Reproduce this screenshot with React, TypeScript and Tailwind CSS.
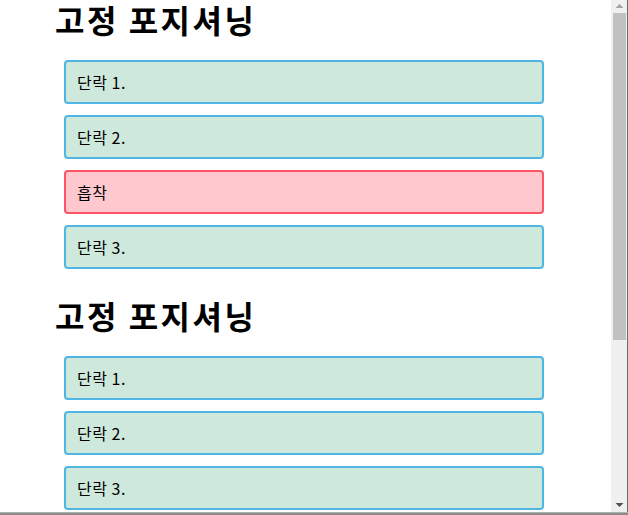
import React from "react";

interface BoxProps {
  text: string;
  sticky?: boolean;
}

const Box = ({ text, sticky }: BoxProps) => {
  return (
    <div
      className={
        sticky
          ? "w-[480px] h-[44px] flex items-center pl-[11px] border-2 border-[#ff5466] bg-[#ffc8ce] rounded-[4px] text-[16px] tracking-[0.5px]"
          : "w-[480px] h-[44px] flex items-center pl-[11px] border-2 border-[#4fb6e2] bg-[#cee8dc] rounded-[4px] text-[16px] tracking-[0.5px]"
      }
    >
      {text}
    </div>
  );
};

const Section = ({ items, first }: { items: { text: string; sticky?: boolean }[]; first?: boolean }) => {
  return (
    <section className={first ? "" : "mt-[27px]"}>
      <h1 className="pl-[55px] h-[38px] leading-[38px] text-[32px] font-bold tracking-[2.5px] mb-[22px]">고정 포지셔닝</h1>
      <div className="pl-[64px] flex flex-col gap-[11px]">
        {items.map((it, i) => (
          <Box key={i} text={it.text} sticky={it.sticky} />
        ))}
      </div>
    </section>
  );
};

export default function App() {
  return (
    <div
      className="w-[628px] h-[515px] flex flex-col overflow-hidden bg-white text-black"
      style={{ fontFamily: '"Noto Sans CJK KR", "Noto Sans", sans-serif' }}
    >
      <div className="flex flex-1 overflow-hidden">
        <div className="w-[611px] overflow-hidden">
          <Section
            first
            items={[{ text: "단락 1." }, { text: "단락 2." }, { text: "흡착", sticky: true }, { text: "단락 3." }]}
          />
          <Section items={[{ text: "단락 1." }, { text: "단락 2." }, { text: "단락 3." }]} />
        </div>
        {/* scrollbar */}
        <div className="w-[17px] bg-[#f0f0f0] border-r border-[#6b6b6b] flex flex-col items-center">
          <svg width="9" height="13" viewBox="0 0 9 13">
            <path d="M0.5 8 L4.5 4 L8.5 8 Z" fill="#a3a3a3" />
          </svg>
          <div className="w-[13px] h-[327px] bg-[#c1c1c1]" />
          <div className="flex-1" />
          <svg width="9" height="13" viewBox="0 0 9 13" className="mb-[1px]">
            <path d="M0.5 5 L4.5 9 L8.5 5 Z" fill="#505050" />
          </svg>
        </div>
      </div>
      <div className="h-[3px] bg-[#8c8c8c] border-t border-[#b0b0b0]" />
    </div>
  );
}
